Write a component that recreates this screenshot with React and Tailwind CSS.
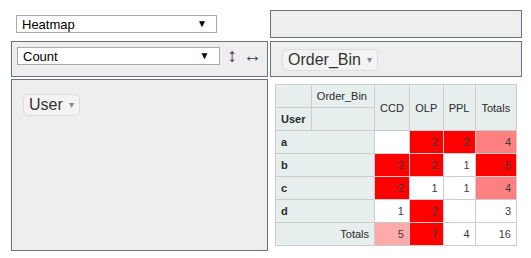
const cols = ['CCD', 'OLP', 'PPL'];
const colW = ['w-[34px]', 'w-[34px]', 'w-[32px]'];

const rows = [
  { key: 'a', vals: [null, 2, 2], total: 4 },
  { key: 'b', vals: [2, 2, 1], total: 5 },
  { key: 'c', vals: [2, 1, 1], total: 4 },
  { key: 'd', vals: [1, 2, null], total: 3 },
];

const cellBg = (v) => (v === 2 ? 'bg-[#ff0000]' : 'bg-white');
const totalBg = (v) => (v === 5 ? 'bg-[#ff0000]' : v === 4 ? 'bg-[#ff8080]' : 'bg-white');
const colTotals = [
  { v: 5, bg: 'bg-[#ffaaaa]' },
  { v: 7, bg: 'bg-[#ff0000]' },
  { v: 4, bg: 'bg-white' },
];

function FakeSelect({ label, width }) {
  return (
    <div className={`flex h-[18px] ${width} items-center justify-between border border-[#a9a9a9] bg-white pl-[5px] pr-[9px] text-[13px] leading-none text-black`}>
      <span>{label}</span>
      <span className="text-[10px]">▼</span>
    </div>
  );
}

function Pill({ label }) {
  return (
    <span className="inline-flex items-center gap-[6px] rounded-[5px] border border-[#ddd] bg-[#f3f3f3] px-[5px] py-[2px] text-[16px] leading-[16px] text-[#333]">
      {label}
      <span className="text-[10px] text-[#888]">▾</span>
    </span>
  );
}

const thBase = 'border border-[#cdcdcd] bg-[#e6eeee] px-[5px] py-[5px] leading-[12px]';
const th = `${thBase} font-normal`;
const thBold = `${thBase} font-bold`;
const td = 'border border-[#cdcdcd] px-[5px] py-[5px] leading-[12px] text-right text-[#3d3d3d]';

export default function App() {
  return (
    <div className="pl-[11px] pt-[10px] font-['Liberation_Sans',Arial,sans-serif]">
      <div className="flex gap-[2px]">
        <div className="h-[28px] w-[257px] p-[5px]">
          <FakeSelect label="Heatmap" width="w-[201px]" />
        </div>
        <div className="h-[28px] w-[252px] border border-gray-500 bg-[#eee]" />
      </div>

      <div className="mt-[3px] flex gap-[2px]">
        <div className="flex h-[36px] w-[257px] items-start border border-gray-500 bg-[#eee] p-[5px]">
          <FakeSelect label="Count" width="w-[204px]" />
          <span className="ml-[8px] text-[19px] leading-[18px] text-[#4a2f5f]">↕</span>
          <span className="ml-[6px] text-[19px] leading-[18px] text-[#2a3f5f]">↔</span>
        </div>
        <div className="h-[36px] w-[252px] border border-gray-500 bg-[#eee] px-[11px] pt-[6px]">
          <Pill label="Order_Bin" />
        </div>
      </div>

      <div className="mt-[2px] flex gap-[2px]">
        <div className="h-[172px] w-[257px] border border-gray-500 bg-[#eee] px-[11px] pt-[13px]">
          <Pill label="User" />
        </div>
        <div className="w-[252px] p-[5px]">
          <table className="border-collapse text-[11px] text-[#2a2a2a]">
            <thead>
              <tr className="h-[23px]">
                <th className={`${th} w-[36px]`}></th>
                <th className={`${th} w-[64px] text-left align-top`}>Order_Bin</th>
                {cols.map((c, i) => (
                  <th key={c} rowSpan={2} className={`${th} ${colW[i]} text-center align-middle`}>{c}</th>
                ))}
                <th rowSpan={2} className={`${th} w-[42px] text-center align-middle`}>Totals</th>
              </tr>
              <tr className="h-[23px]">
                <th className={`${thBold} text-left`}>User</th>
                <th className={th}></th>
              </tr>
            </thead>
            <tbody>
              {rows.map((r) => (
                <tr key={r.key} className="h-[23px]">
                  <th colSpan={2} className={`${thBold} text-left`}>{r.key}</th>
                  {r.vals.map((v, i) => (
                    <td key={i} className={`${td} ${cellBg(v)}`}>{v ?? ''}</td>
                  ))}
                  <td className={`${td} ${totalBg(r.total)}`}>{r.total}</td>
                </tr>
              ))}
              <tr className="h-[23px]">
                <th colSpan={2} className={`${th} text-right`}>Totals</th>
                {colTotals.map((c, i) => (
                  <td key={i} className={`${td} ${c.bg}`}>{c.v}</td>
                ))}
                <td className={`${td} bg-white`}>16</td>
              </tr>
            </tbody>
          </table>
        </div>
      </div>
    </div>
  );
}
